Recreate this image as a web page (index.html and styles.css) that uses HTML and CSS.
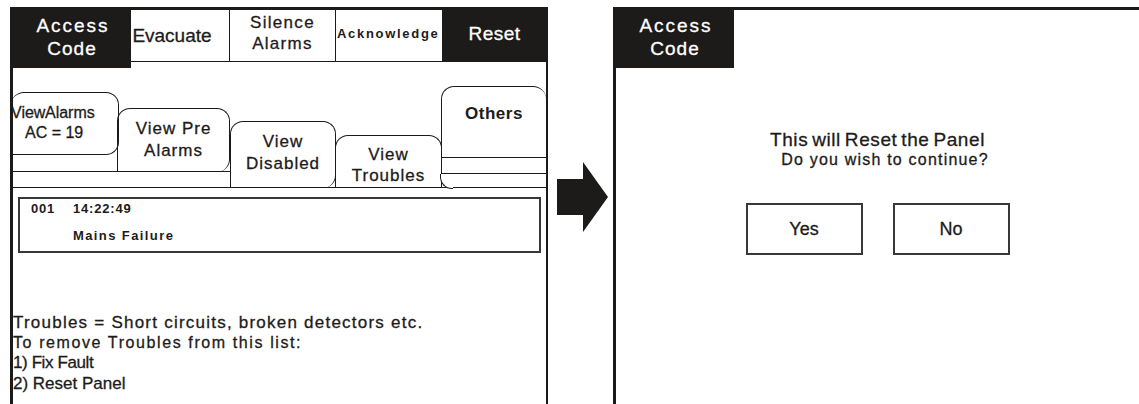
FILE: index.html
```html
<!DOCTYPE html>
<html lang="en">
<head>
    <meta charset="UTF-8">
    <title>Panel Reset</title>
    <link rel="stylesheet" href="styles.css">
</head>
<body>

<div class="stage">
    <!-- Troubles screen -->
    <div class="screen screen-left">
        <div class="topbar">
            <div class="key key-dark key-access"><div><span class="spaced">Access</span><br><span class="code">Code</span></div></div>
            <div class="key key-evac"><div>Evacuate</div></div>
            <div class="key key-silence"><div>Silence<br>Alarms</div></div>
            <div class="key key-ack"><div>Acknowledge</div></div>
            <div class="key key-dark key-reset"><div>Reset</div></div>
        </div>

        <div class="tabs">
            <div class="tab-pair">
                <div class="tab tab-alarms">View Alarms<br><span class="ac">AC = 19</span></div>
                <div class="tab tab-pre">View Pre<br>Alarms</div>
            </div>
            <div class="tab tab-disabled">View<br>Disabled</div>
            <div class="tab tab-troubles">View<br>Troubles</div>
            <div class="tab tab-others">
                <div class="others-top">Others</div>
                <div class="others-mid"></div>
            </div>
        </div>

        <div class="event-list">
            <div class="event-row"><span class="event-no">001</span><span>14:22:49</span></div>
            <div class="event-row event-row-2"><span class="event-no"></span><span>Mains Failure</span></div>
        </div>

        <div class="notes">
            <p class="note-main">Troubles = Short circuits, broken detectors etc.</p>
            <p class="note-small">To remove Troubles from this list:</p>
            <p class="note-step note-tight">1) Fix Fault</p>
            <p class="note-step">2) Reset Panel</p>
        </div>
    </div>

    <div class="arrow">
        <svg width="52" height="72" viewBox="0 0 52 72">
            <polygon points="0,17 26,17 26,0 51,35 26,70 26,53 0,53" fill="#1d1b1a"/>
        </svg>
    </div>

    <!-- Confirm screen -->
    <div class="screen screen-right">
        <div class="topbar">
            <div class="key key-dark key-access"><div><span class="spaced">Access</span><br><span class="code">Code</span></div></div>
        </div>
        <div class="confirm">
            <p class="confirm-title">This will Reset the Panel</p>
            <p class="confirm-sub">Do you wish to continue?</p>
            <div class="confirm-buttons">
                <div class="btn">Yes</div>
                <div class="btn">No</div>
            </div>
        </div>
    </div>
</div>

</body>
</html>
```

FILE: styles.css
```css
* {
    box-sizing: border-box;
    margin: 0;
    padding: 0;
}

html, body {
    height: 404px;
    overflow: hidden;
}

body {
    font-family: 'Liberation Sans', Arial, sans-serif;
    color: #1d1b1a;
    background: #fff;
    -webkit-text-stroke: 0.3px currentColor;
}

.stage {
    display: flex;
    align-items: flex-start;
    padding: 7px 0 0 10px;
}

.screen {
    height: 410px;
    border-top: 3px solid #1d1b1a;
    border-left: 3px solid #1d1b1a;
}

.screen-left {
    width: 538px;
    border-right: 2px solid #1d1b1a;
}

.screen-right {
    flex: 1;
}

/* Top keys */
.topbar {
    display: flex;
    align-items: flex-start;
}

.key {
    height: 52px;
    border-bottom: 1px solid #1d1b1a;
    border-right: 1px solid #1d1b1a;
    display: flex;
    align-items: center;
    justify-content: center;
    text-align: center;
    font-size: 19px;
    line-height: 20px;
}

.key-dark {
    background: #1d1b1a;
    color: #fff;
    border: none;
}

.key-access {
    width: 118px;
    height: 61px;
    margin-top: -3px;
    font-size: 19px;
    line-height: 23px;
    padding-bottom: 1px;
}

.spaced {
    letter-spacing: 2px;
    padding-left: 2px;
}

.code {
    letter-spacing: 1px;
}

.key-evac {
    width: 99px;
    padding-top: 1px;
    padding-right: 16px;
}

.key-silence {
    width: 106px;
    font-size: 17px;
    line-height: 21px;
    letter-spacing: 1.3px;
    padding-bottom: 6px;
}

.key-ack {
    width: 107px;
    font-size: 13px;
    font-weight: bold;
    letter-spacing: 1.7px;
    justify-content: flex-start;
    padding-left: 1px;
    padding-bottom: 3px;
    -webkit-text-stroke: 0;
}

.key-reset {
    width: 103px;
    margin-top: -3px;
    height: 55px;
    letter-spacing: 0.5px;
    padding-bottom: 1px;
}

/* Tabs */
.tabs {
    display: flex;
    align-items: flex-start;
    height: 120px;
    border-bottom: 1px solid #1d1b1a;
}

.tab-pair {
    display: flex;
    align-items: flex-start;
    width: 217px;
    height: 104px;
    border-bottom: 1px solid #1d1b1a;
}

.tab {
    border: 1px solid #1d1b1a;
    border-radius: 13px 13px 13px 0;
    text-align: center;
    font-size: 17px;
    line-height: 22px;
    letter-spacing: 1px;
}

.tab-alarms {
    width: 108px;
    height: 63px;
    margin-top: 24px;
    margin-left: -2px;
    border-left: none;
    text-align: left;
    font-size: 16px;
    line-height: 20px;
    padding-top: 10px;
    letter-spacing: 0;
    word-spacing: -4px;
}

.ac {
    padding-left: 14px;
    word-spacing: 0;
}

.tab-pre {
    width: 113px;
    height: 64px;
    margin-top: 40px;
    margin-left: -2px;
    border-bottom: none;
    padding-top: 9px;
}

.tab-disabled {
    width: 106px;
    height: 67px;
    margin-top: 53px;
    border-bottom: none;
    padding-top: 9px;
}

.tab-troubles {
    position: relative;
    width: 107px;
    height: 53px;
    margin-top: 67px;
    margin-left: -1px;
    border-bottom: none;
    border-radius: 13px 13px 0 0;
    padding-top: 8px;
    line-height: 21px;
}

/* flared foot joining the base line */
.tab-troubles::after {
    content: "";
    position: absolute;
    left: 100%;
    bottom: -1px;
    width: 12px;
    height: 14px;
    margin-left: -1px;
    background: #fff;
    border-left: 1px solid #1d1b1a;
    border-bottom: 1px solid #1d1b1a;
    border-bottom-left-radius: 12px;
}

.tab-others {
    flex: 1;
    height: 102px;
    margin-top: 18px;
    margin-left: -1px;
    border-right: none;
    border-bottom: none;
    border-radius: 13px 13px 0 0;
}

.others-top {
    height: 71px;
    border-bottom: 1px solid #1d1b1a;
    padding-top: 16px;
    font-weight: bold;
    letter-spacing: 0.5px;
    -webkit-text-stroke: 0;
}

.others-mid {
    height: 16px;
    border-bottom: 1px solid #1d1b1a;
}

/* Event list */
.event-list {
    margin: 9px 5px 0 5px;
    height: 56px;
    border: 2px solid #3a3836;
    padding: 0 0 0 11px;
    font-size: 13px;
    font-weight: bold;
    letter-spacing: 0.8px;
    -webkit-text-stroke: 0;
}

.event-row {
    display: flex;
    line-height: 20px;
}

.event-row-2 {
    margin-top: 7px;
    letter-spacing: 1.4px;
}

.event-no {
    width: 42px;
}

/* Notes */
.notes {
    margin-top: 60px;
    font-size: 17px;
}

.note-main {
    line-height: 20px;
    letter-spacing: 1.23px;
}

.note-small {
    font-size: 16px;
    line-height: 19px;
    letter-spacing: 1.6px;
}

.note-step {
    line-height: 21px;
}

.note-tight {
    letter-spacing: -0.4px;
}

/* Arrow */
.arrow {
    margin: 155px 4px 0 9px;
    line-height: 0;
}

/* Confirm */
.confirm {
    display: flex;
    flex-direction: column;
    align-items: center;
    padding-top: 62px;
}

.confirm-title {
    font-size: 19px;
    line-height: 20px;
    letter-spacing: 0.6px;
    word-spacing: -2px;
}

.confirm-sub {
    font-size: 16px;
    line-height: 20px;
    letter-spacing: 1.2px;
    margin-left: 15px;
}

.confirm-buttons {
    display: flex;
    gap: 30px;
    margin-top: 33px;
}

.btn {
    width: 117px;
    height: 52px;
    border: 2px solid #3a3836;
    display: flex;
    align-items: center;
    justify-content: center;
    font-size: 18px;
}
```
